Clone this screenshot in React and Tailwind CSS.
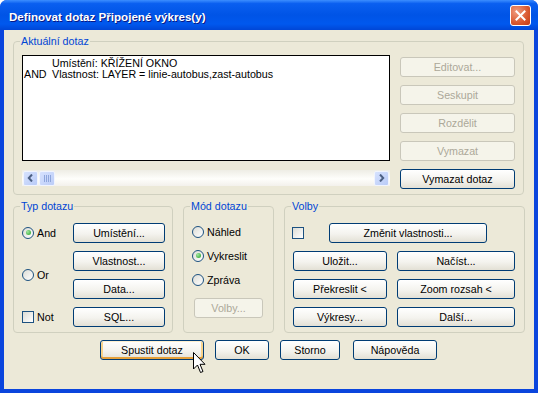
import React from "react";

function Btn({ children, className = "", disabled = false, focused = false }) {
  const look = disabled
    ? "border-[#C9C7BA] bg-[#F5F4EA] text-[#ACA899]"
    : "border-[#003C74] bg-[linear-gradient(180deg,#FFFFFF_0%,#F4F3EE_55%,#E3E0D5_100%)] text-black";
  const ring = focused
    ? "shadow-[inset_0_1px_0_#FFF0CF,inset_0_-2px_0_#E5A03A,inset_2px_0_0_#F8D38A,inset_-2px_0_0_#F8D38A]"
    : "";
  return (
    <div className={`flex h-[20px] items-center justify-center rounded-[3px] border text-[10.7px] leading-none ${look} ${ring} ${className}`}>
      {children}
    </div>
  );
}

function Radio({ checked = false, label }) {
  return (
    <div className="flex items-center gap-[3px]">
      <span className="flex h-[12px] w-[12px] items-center justify-center rounded-full border border-[#1C5180] bg-[linear-gradient(135deg,#DCDCD5_0%,#FFFFFF_100%)]">
        {checked && <span className="h-[5px] w-[5px] rounded-full bg-[radial-gradient(circle_at_35%_35%,#A2E6A2,#21A121)]" />}
      </span>
      <span>{label}</span>
    </div>
  );
}

function Check({ label }) {
  return (
    <div className="flex items-center gap-[3px]">
      <span className="h-[12px] w-[12px] border border-[#1C5180] bg-[linear-gradient(135deg,#DCDCD5_0%,#FFFFFF_100%)]" />
      {label && <span>{label}</span>}
    </div>
  );
}

function Group({ title, className = "", children }) {
  return (
    <fieldset className={`rounded-[4px] border border-[#D0D0BF] ${className}`}>
      <legend className="ml-[6px] px-[1px] text-[10.7px] leading-[13px] text-[#0046D5]">{title}</legend>
      {children}
    </fieldset>
  );
}

function ScrollBtn({ dir }) {
  return (
    <div className="flex h-[15px] w-[15px] items-center justify-center rounded-[2px] border border-[#F0F4FE] bg-[linear-gradient(135deg,#D6E2FE_0%,#B9CBF7_100%)]">
      <svg width="7" height="8" viewBox="0 0 7 8">
        <path
          d={dir === "left" ? "M5 0.5 L1.8 4 L5 7.5" : "M2 0.5 L5.2 4 L2 7.5"}
          fill="none"
          stroke="#4D6185"
          strokeWidth="2"
        />
      </svg>
    </div>
  );
}

export default function App() {
  return (
    <div className="h-[393px] w-[538px] bg-white font-['Liberation_Sans',Arial,sans-serif] text-[10.7px] text-black">
      <div className="flex h-full w-full flex-col overflow-hidden rounded-t-[7px] bg-[#0A45DD]">
        {/* Title bar */}
        <div className="flex h-[30px] shrink-0 items-center bg-[linear-gradient(180deg,#3C8EFF_0%,#0A5FF0_12%,#0054E6_50%,#0058EE_80%,#0046D6_100%)] pl-[9px] pr-[7px]">
          <span className="mt-[3px] text-[11.6px] font-bold text-white [text-shadow:1px_1px_#0A1883]">
            Definovat dotaz Připojené výkres(y)
          </span>
          <div className="ml-auto mt-[1px] flex h-[21px] w-[21px] items-center justify-center rounded-[3px] border border-white bg-[radial-gradient(circle_at_30%_30%,#F09C80,#D9582F_60%,#C13A14)]">
            <svg width="11" height="11" viewBox="0 0 11 11">
              <path d="M1.5 1.5 L9.5 9.5 M9.5 1.5 L1.5 9.5" stroke="white" strokeWidth="2" strokeLinecap="square" />
            </svg>
          </div>
        </div>

        {/* Body */}
        <div className="relative mx-[4px] h-[359px] shrink-0 bg-[#ECE9D8] px-[9px] pt-[5px]">
          <Group title="Aktuální dotaz" className="h-[160px] w-[511px]">
            <div className="flex pl-[8px] pt-[7px]">
              <div className="w-[368px]">
                <div className="h-[106px] border border-black bg-white pl-[1px] pt-[2px] leading-[11px]">
                  <div className="grid grid-cols-[28px_1fr]">
                    <span />
                    <span>Umístění: KŘÍŽENÍ OKNO</span>
                    <span>AND</span>
                    <span>Vlastnost: LAYER = linie-autobus,zast-autobus</span>
                  </div>
                </div>
                <div className="mt-[9px] flex h-[16px] items-center bg-[linear-gradient(180deg,#EEEDE5_0%,#FEFEFB_55%,#F3F1EC_100%)] px-[1px]">
                  <ScrollBtn dir="left" />
                  <div className="ml-[1px] flex h-[15px] w-[16px] items-center justify-center gap-[1px] rounded-[2px] border border-[#F0F4FE] bg-[linear-gradient(135deg,#D6E2FE_0%,#BCCDF8_100%)]">
                    <span className="h-[7px] w-[1px] bg-[#8EA6DC]" />
                    <span className="h-[7px] w-[1px] bg-[#8EA6DC]" />
                    <span className="h-[7px] w-[1px] bg-[#8EA6DC]" />
                    <span className="h-[7px] w-[1px] bg-[#8EA6DC]" />
                  </div>
                  <div className="flex-1" />
                  <ScrollBtn dir="right" />
                </div>
              </div>
              <div className="ml-[10px] flex w-[115px] flex-col gap-[8px] pt-[2px]">
                <Btn disabled>Editovat...</Btn>
                <Btn disabled>Seskupit</Btn>
                <Btn disabled>Rozdělit</Btn>
                <Btn disabled>Vymazat</Btn>
                <Btn>Vymazat dotaz</Btn>
              </div>
            </div>
          </Group>

          <div className="mt-[5px] flex gap-[10px]">
            <Group title="Typ dotazu" className="h-[133px] w-[160px]">
              <div className="grid grid-cols-[51px_92px] grid-rows-[20px_20px_20px_20px] gap-y-[8px] pl-[8px] pt-[10px]">
                <div className="col-start-1 row-start-1 self-center">
                  <Radio checked label="And" />
                </div>
                <div className="col-start-1 row-span-2 row-start-2 self-center">
                  <Radio label="Or" />
                </div>
                <div className="col-start-1 row-start-4 self-center">
                  <Check label="Not" />
                </div>
                <Btn className="col-start-2 row-start-1">Umístění...</Btn>
                <Btn className="col-start-2 row-start-2">Vlastnost...</Btn>
                <Btn className="col-start-2 row-start-3">Data...</Btn>
                <Btn className="col-start-2 row-start-4">SQL...</Btn>
              </div>
            </Group>

            <Group title="Mód dotazu" className="h-[133px] w-[91px]">
              <div className="flex flex-col pl-[8px] pt-[9px]">
                <div className="flex flex-col gap-[4px]">
                  <div className="flex h-[20px] items-center">
                    <Radio label="Náhled" />
                  </div>
                  <div className="flex h-[20px] items-center">
                    <Radio checked label="Vykreslit" />
                  </div>
                  <div className="flex h-[20px] items-center">
                    <Radio label="Zpráva" />
                  </div>
                </div>
                <Btn disabled className="ml-[2px] mt-[8px] w-[69px]">Volby...</Btn>
              </div>
            </Group>

            <Group title="Volby" className="h-[133px] w-[241px]">
              <div className="flex flex-col gap-[8px] pl-[7px] pt-[10px]">
                <div className="flex h-[20px] items-center">
                  <Check />
                  <Btn className="ml-[25px] w-[158px]">Změnit vlastnosti...</Btn>
                </div>
                <div className="grid grid-cols-[94px_118px] gap-x-[10px] gap-y-[8px] pl-[1px]">
                  <Btn>Uložit...</Btn>
                  <Btn>Načíst...</Btn>
                  <Btn>Překreslit &lt;</Btn>
                  <Btn>Zoom rozsah &lt;</Btn>
                  <Btn>Výkresy...</Btn>
                  <Btn>Další...</Btn>
                </div>
              </div>
            </Group>
          </div>

          <div className="mt-[7px] flex pl-[87px]">
            <Btn focused className="w-[104px]">Spustit dotaz</Btn>
            <Btn className="ml-[11px] w-[54px]">OK</Btn>
            <Btn className="ml-[11px] w-[60px]">Storno</Btn>
            <Btn className="ml-[13px] w-[84px]">Nápověda</Btn>
          </div>

          {/* mouse pointer */}
          <svg className="absolute left-[189px] top-[322px]" width="13" height="22" viewBox="0 0 13 22">
            <path d="M0.5 0.5 L0.5 17 L4.5 13 L7.5 20.5 L10 19.5 L7 12.3 L12 12.3 Z" fill="white" stroke="black" strokeWidth="1" strokeLinejoin="miter" />
          </svg>
        </div>
      </div>
    </div>
  );
}
